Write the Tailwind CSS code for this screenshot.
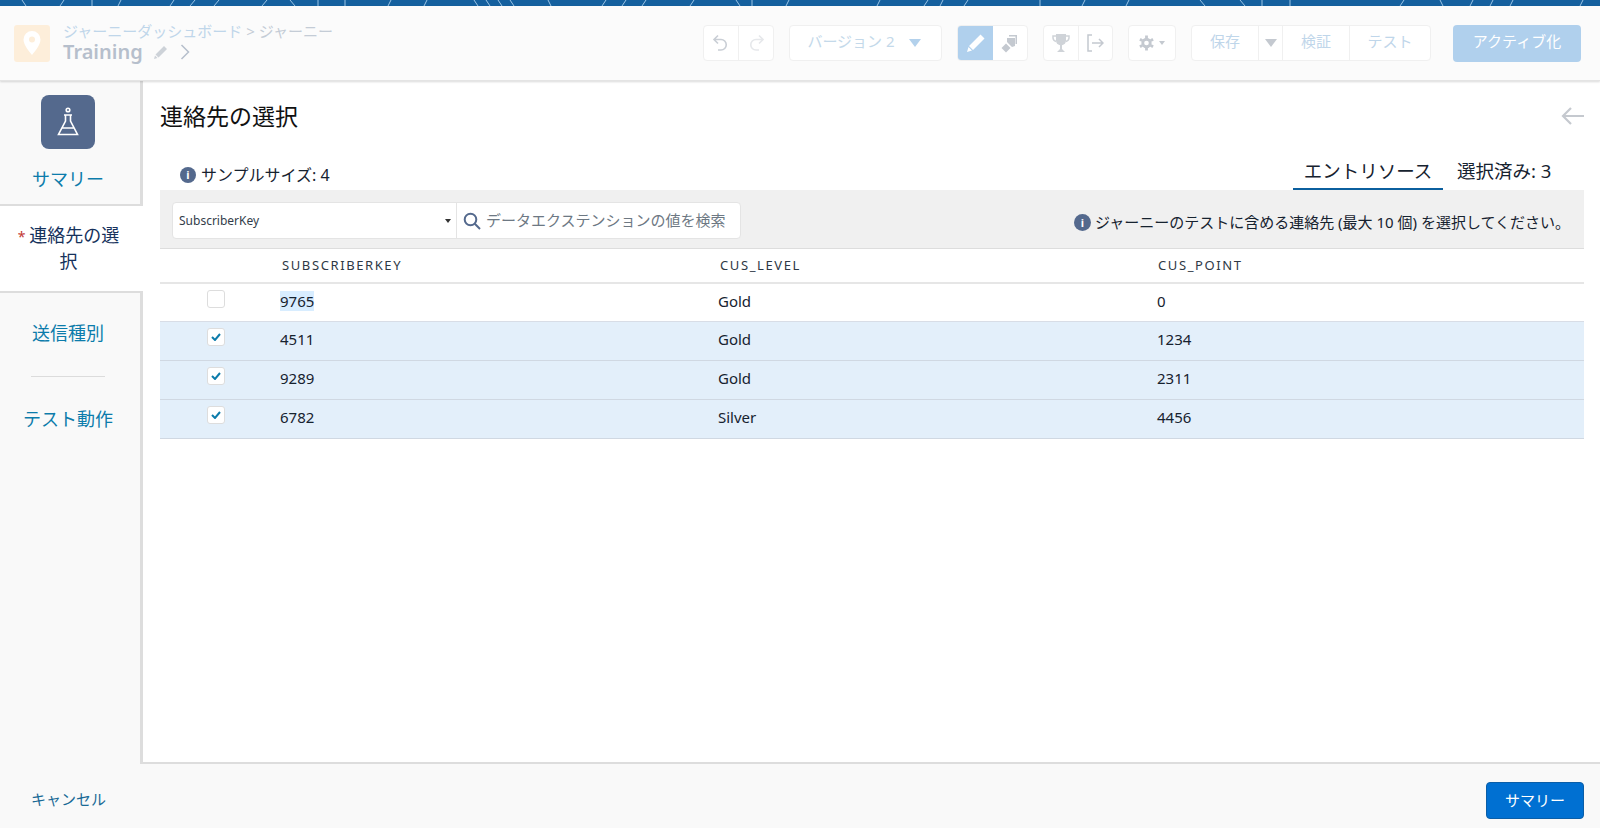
<!DOCTYPE html>
<html lang="ja">
<head>
    <meta charset="UTF-8">
    <title>Journey Builder - 連絡先の選択</title>
    <script src="https://cdn.jsdelivr.net/npm/@tailwindcss/browser@4"></script>
</head>
<body class="bg-[#f9f9f9] text-[#16325c] font-['Noto_Sans','Noto_Sans_CJK_JP',sans-serif] overflow-hidden">
<div class="flex flex-col h-[828px] w-[1600px]">

    <!-- Top band -->
    <div class="h-[6px] bg-[#15609e] shrink-0 overflow-hidden">
        <svg width="1600" height="6" fill="none" stroke="#9cc4e4" stroke-width="1">
            <path d="M22 0l4 6M60 6l4-6M92 0v6M118 6l3-6M170 6l4-6M190 6l5-6M214 6l5-6M262 6l5-6M290 0l5 6M318 0v6M345 6V0M388 6l3-6M424 6l3-6M474 0l4 6M486 0l4 6M498 0l4 6M510 0l4 6M548 0l3 6M602 6l4-6M622 6l4-6M642 6l4-6M690 6l4-6M736 0l4 6M752 0v6M786 6l3-6M880 0l-3 6M924 6l4-6M940 6l3-6M964 6l4-6M1040 6V0M1082 6l3-6M1126 6l3-6M1200 0l5 6M1240 0l5 6M1262 6V0M1290 6V0M1400 6l4-6M1440 0l3 6M1470 6l3-6M1490 6l3-6M1510 6l3-6M1580 6l3-6"/>
        </svg>
    </div>

    <!-- Header -->
    <header class="h-[75px] shrink-0 bg-[#fbfbfb] border-b border-[#e4e4e4] shadow-[0_1px_2px_rgba(0,0,0,0.15)] relative flex items-center pl-[14px] pr-[19px]">
        <div class="w-[36px] h-[37px] rounded-[3px] bg-[#fdeeda] flex items-center justify-center">
            <svg width="18" height="24" viewBox="0 0 18 24"><path fill="#fff" fill-rule="evenodd" d="M9 0a8.500 8.500 0 0 0-8.500 8.500C.5 14 7 21.500 9 24c2-2.500 8.500-10 8.500-15.500A8.500 8.500 0 0 0 9 0zm0 5.500a3 3 0 1 1 0 6 3 3 0 0 1 0-6z"/></svg>
        </div>
        <div class="ml-[13px]">
            <div class="text-[15px] leading-[18px] text-[#bfd6ea]">ジャーニーダッシュボード <span class="text-[#c4ccd6]">&gt; ジャーニー</span></div>
            <div class="flex items-center text-[20px] leading-[24px] font-semibold text-[#b6bfcc]">
                Training
                <svg class="ml-[10px]" width="15" height="15" viewBox="0 0 15 15"><path fill="#cdd2d8" d="M11 1l3 3-8.500 8.500-3-3zM2 10.500l2.500 2.500L1 14z"/></svg>
                <svg class="ml-[12px]" width="10" height="16" viewBox="0 0 10 16" fill="none" stroke="#b6bfcc" stroke-width="1.500"><path d="M1.500 1l7 7-7 7"/></svg>
            </div>
        </div>

        <div class="ml-auto flex items-center text-[15px] text-[#bfd6ea]">
            <!-- undo / redo -->
            <div class="flex h-[36px] w-[71px] border border-[#f0f0f0] rounded-[4px] bg-white divide-x divide-[#f0f0f0]">
                <div class="flex-1 flex items-center justify-center">
                    <svg width="18" height="18" viewBox="0 0 18 18" fill="none" stroke="#c9ced5" stroke-width="1.600"><path d="M6 1.500L2 5.500l4 4M2 5.500h7a5 5 0 0 1 0 10.500H6"/></svg>
                </div>
                <div class="flex-1 flex items-center justify-center">
                    <svg width="18" height="18" viewBox="0 0 18 18" fill="none" stroke="#e6e8eb" stroke-width="1.600"><path d="M12 1.500l4 4-4 4M16 5.500H9a5 5 0 0 0 0 10.500h3"/></svg>
                </div>
            </div>
            <!-- version -->
            <div class="ml-[15px] flex items-center justify-center gap-[14px] h-[36px] w-[153px] pb-[3px] pr-[3px] border border-[#f0f0f0] rounded-[4px] bg-white text-[#c4d9ea]">
                バージョン 2
                <span class="w-0 h-0 mt-[3px] border-x-[6px] border-x-transparent border-t-[8px] border-t-[#b3d1ec]"></span>
            </div>
            <!-- edit / copy -->
            <div class="ml-[15px] flex h-[36px] w-[71px] border border-[#f0f0f0] rounded-[4px] bg-white overflow-hidden">
                <div class="w-[35px] bg-[#b0d0ed] flex items-center justify-center">
                    <svg width="20" height="20" viewBox="0 0 20 20"><path fill="#fff" d="M14.500 1.500l4 4L7 17l-4-4zM2.500 14l3.500 3.500L1 19z"/></svg>
                </div>
                <div class="flex-1 flex items-center justify-center">
                    <svg width="18" height="20" viewBox="0 0 18 20" fill="#c4c9d0"><path d="M6 5h8v8l-3 1-5-5zM8 2h8v9h-1.500V3.500H8z"/><path d="M5 10.500l4.500 4.500L5 19.500 .5 15z"/></svg>
                </div>
            </div>
            <!-- trophy / exit -->
            <div class="ml-[15px] flex h-[36px] w-[70px] border border-[#f0f0f0] rounded-[4px] bg-white divide-x divide-[#f0f0f0]">
                <div class="flex-1 flex items-center justify-center">
                    <svg width="18" height="20" viewBox="0 0 18 20"><path fill="#cfd3d8" d="M4 1h10v6.500a5 5 0 0 1-4 4.700V16l3 3H5l3-3v-3.800a5 5 0 0 1-4-4.700z"/><path fill="none" stroke="#cfd3d8" stroke-width="1.500" d="M4 3H1v2a4 4 0 0 0 3 3.500M14 3h3v2a4 4 0 0 1-3 3.500"/></svg>
                </div>
                <div class="flex-1 flex items-center justify-center">
                    <svg width="18" height="20" viewBox="0 0 18 20" fill="none" stroke="#c4c9d0" stroke-width="1.500"><path d="M6 2H2v16h4M6 10h11M13 6l4 4-4 4"/></svg>
                </div>
            </div>
            <!-- settings -->
            <div class="ml-[15px] flex items-center justify-center gap-[5px] h-[36px] w-[48px] border border-[#f0f0f0] rounded-[4px] bg-white">
                <svg width="15" height="16" viewBox="0 0 16 16"><circle cx="8" cy="8" r="4" fill="none" stroke="#c4c9d0" stroke-width="3"/><path stroke="#c4c9d0" stroke-width="3" d="M8 0v3M8 13v3M1 4l2.500 1.500M12.500 10.500L15 12M1 12l2.500-1.500M12.500 5.500L15 4"/></svg>
                <span class="w-0 h-0 border-x-[3px] border-x-transparent border-t-[4px] border-t-[#c4c9d0]"></span>
            </div>
            <!-- save / validate / test -->
            <div class="ml-[15px] flex h-[36px] w-[240px] border border-[#f0f0f0] rounded-[4px] bg-white divide-x divide-[#f0f0f0]">
                <div class="w-[67px] pb-[3px] flex items-center justify-center">保存</div>
                <div class="w-[24px] flex items-center justify-center">
                    <span class="w-0 h-0 border-x-[6px] border-x-transparent border-t-[8px] border-t-[#c4c9d0]"></span>
                </div>
                <div class="w-[67px] pb-[3px] flex items-center justify-center">検証</div>
                <div class="flex-1 pb-[3px] flex items-center justify-center">テスト</div>
            </div>
            <!-- activate -->
            <div class="ml-[22px] pb-[3px] flex items-center justify-center h-[37px] w-[128px] rounded-[4px] bg-[#b0d0ed] text-white">アクティブ化</div>
        </div>
    </header>

    <!-- Middle -->
    <div class="flex-1 flex min-h-0">
        <!-- Sidebar -->
        <aside class="w-[143px] shrink-0 flex flex-col text-[18px] text-center text-[#0c7cab]">
            <div class="h-[125px] pr-[4px] border-r-[3px] border-b-2 border-[#dddddd] flex flex-col items-center pt-[14px]">
                <div class="w-[54px] h-[54px] rounded-[8px] bg-[#54698d] flex items-center justify-center">
                    <svg width="24" height="30" viewBox="0 0 24 30" fill="none" stroke="#fff" stroke-width="1.600"><circle cx="12" cy="3" r="1.800"/><path d="M8 8h8M9.500 8v6L2.500 27.500h19L14.500 14V8M6 21h12"/></svg>
                </div>
                <div class="mt-[18px] leading-[24px]">サマリー</div>
            </div>
            <div class="h-[85px] bg-white text-[#16325c] flex items-center justify-center pl-[12px] pr-[18px] leading-[25px]">
                <div><span class="text-[#c23934] text-[14px]">* </span>連絡先の選択</div>
            </div>
            <div class="flex-1 pr-[4px] border-r-[3px] border-t-2 border-[#dddddd] flex flex-col items-center pt-[28px]">
                <div class="leading-[24px]">送信種別</div>
                <div class="w-[74px] border-t border-[#dcdcdc] mt-[31px]"></div>
                <div class="mt-[30px] leading-[24px]">テスト動作</div>
            </div>
        </aside>

        <!-- Main -->
        <main class="flex-1 bg-white border-b-2 border-[#dddddd] pl-[17px] pr-[16px] pt-[20px] min-w-0">
            <div class="flex items-center justify-between h-[30px]">
                <h1 class="text-[23px] leading-[30px] text-[#111]">連絡先の選択</h1>
                <svg width="24" height="20" viewBox="0 0 24 20" fill="none" stroke="#c5c9cf" stroke-width="2.200"><path d="M11 2L3 10l8 8M3 10h21"/></svg>
            </div>

            <div class="flex items-end justify-between h-[59px]">
                <div class="flex items-center gap-[5px] pl-[20px] text-[16px] leading-[24px] text-[#16222f] mb-[3px]">
                    <span class="w-[16px] h-[16px] rounded-full bg-[#54698d] text-white text-[11px] leading-[16px] font-bold text-center">i</span>
                    サンプルサイズ: 4
                </div>
                <div class="flex items-end text-[18.500px] text-[#16222f]">
                    <div class="w-[150px] h-[36px] border-b-2 border-[#0b5f9e] text-center leading-[34px]">エントリソース</div>
                    <div class="w-[141px] h-[36px] pl-[14px] leading-[34px]">選択済み: 3</div>
                </div>
            </div>

            <!-- Filter bar -->
            <div class="h-[59px] bg-[#f0f0f0] border-b border-[#dddddd] flex items-center justify-between pl-[12px] pr-[14px]">
                <div class="flex mt-[3px] h-[37px] w-[569px] bg-white border border-[#e4e4e4] rounded-[4px] divide-x divide-[#e4e4e4]">
                    <div class="w-[284px] flex items-center justify-between pl-[6px] pr-[5px] text-[12px] text-[#333d4a]">
                        SubscriberKey
                        <span class="w-0 h-0 border-x-[3px] border-x-transparent border-t-[4px] border-t-[#333]"></span>
                    </div>
                    <div class="flex-1 flex items-center gap-[5px] pl-[6px] text-[15px] text-[#6d7883]">
                        <svg width="18" height="18" viewBox="0 0 18 18" fill="none" stroke="#54698d" stroke-width="2"><circle cx="7.500" cy="7.500" r="5.800"/><path d="M11.800 11.800L17 17"/></svg>
                        データエクステンションの値を検索
                    </div>
                </div>
                <div class="flex mt-[7px] items-center gap-[4px] text-[15px] text-[#16222f]">
                    <span class="w-[17px] h-[17px] rounded-full bg-[#54698d] text-white text-[11px] leading-[17px] font-bold text-center">i</span>
                    ジャーニーのテストに含める連絡先 (最大 10 個) を選択してください。
                </div>
            </div>

            <!-- Table -->
            <table class="w-full table-fixed text-[15px] text-[#16222f]">
                <thead>
                    <tr class="h-[34px] border-b-2 border-[#e6e6e6] text-[13px] tracking-[1.600px] text-[#2e3845] text-left">
                        <th class="w-[120px] font-normal"></th>
                        <th class="w-[438px] font-normal pl-[2px]">SUBSCRIBERKEY</th>
                        <th class="w-[439px] font-normal pl-[2px]">CUS_LEVEL</th>
                        <th class="font-normal pl-[1px]">CUS_POINT</th>
                    </tr>
                </thead>
                <tbody class="[&_td]:pb-[2px]">
                    <tr class="h-[38px] border-b border-[#d8dde6]">
                        <td class="pl-[47px] align-top pt-[6px]"><span class="block w-[18px] h-[18px] bg-white border border-[#dddddd] rounded-[3px]"></span></td>
                        <td><span class="bg-[#d8edff]">9765</span></td>
                        <td>Gold</td>
                        <td>0</td>
                    </tr>
                    <tr class="h-[39px] bg-[#e3effa] border-b border-[#d0d8e2]">
                        <td class="pl-[47px] align-top pt-[6px]">
                            <span class="flex items-center justify-center w-[18px] h-[18px] bg-white border border-[#dddddd] rounded-[3px]">
                                <svg width="10" height="8" viewBox="0 0 10 8" fill="none" stroke="#0c7cab" stroke-width="2"><path d="M1 4l3 3 5-6"/></svg>
                            </span>
                        </td>
                        <td>4511</td>
                        <td>Gold</td>
                        <td>1234</td>
                    </tr>
                    <tr class="h-[39px] bg-[#e3effa] border-b border-[#d0d8e2]">
                        <td class="pl-[47px] align-top pt-[6px]">
                            <span class="flex items-center justify-center w-[18px] h-[18px] bg-white border border-[#dddddd] rounded-[3px]">
                                <svg width="10" height="8" viewBox="0 0 10 8" fill="none" stroke="#0c7cab" stroke-width="2"><path d="M1 4l3 3 5-6"/></svg>
                            </span>
                        </td>
                        <td>9289</td>
                        <td>Gold</td>
                        <td>2311</td>
                    </tr>
                    <tr class="h-[39px] bg-[#e3effa] border-b border-[#d0d8e2]">
                        <td class="pl-[47px] align-top pt-[6px]">
                            <span class="flex items-center justify-center w-[18px] h-[18px] bg-white border border-[#dddddd] rounded-[3px]">
                                <svg width="10" height="8" viewBox="0 0 10 8" fill="none" stroke="#0c7cab" stroke-width="2"><path d="M1 4l3 3 5-6"/></svg>
                            </span>
                        </td>
                        <td>6782</td>
                        <td>Silver</td>
                        <td>4456</td>
                    </tr>
                </tbody>
            </table>
        </main>
    </div>

    <!-- Footer -->
    <footer class="h-[64px] shrink-0 flex items-center justify-between pl-[31px] pr-[16px]">
        <span class="text-[15px] text-[#1a6a96] mt-[6px]">キャンセル</span>
        <button class="w-[98px] h-[37px] mt-[9px] rounded-[4px] bg-[#0070d2] border border-[#0a5ea8] text-white text-[15px]">サマリー</button>
    </footer>
</div>
</body>
</html>
